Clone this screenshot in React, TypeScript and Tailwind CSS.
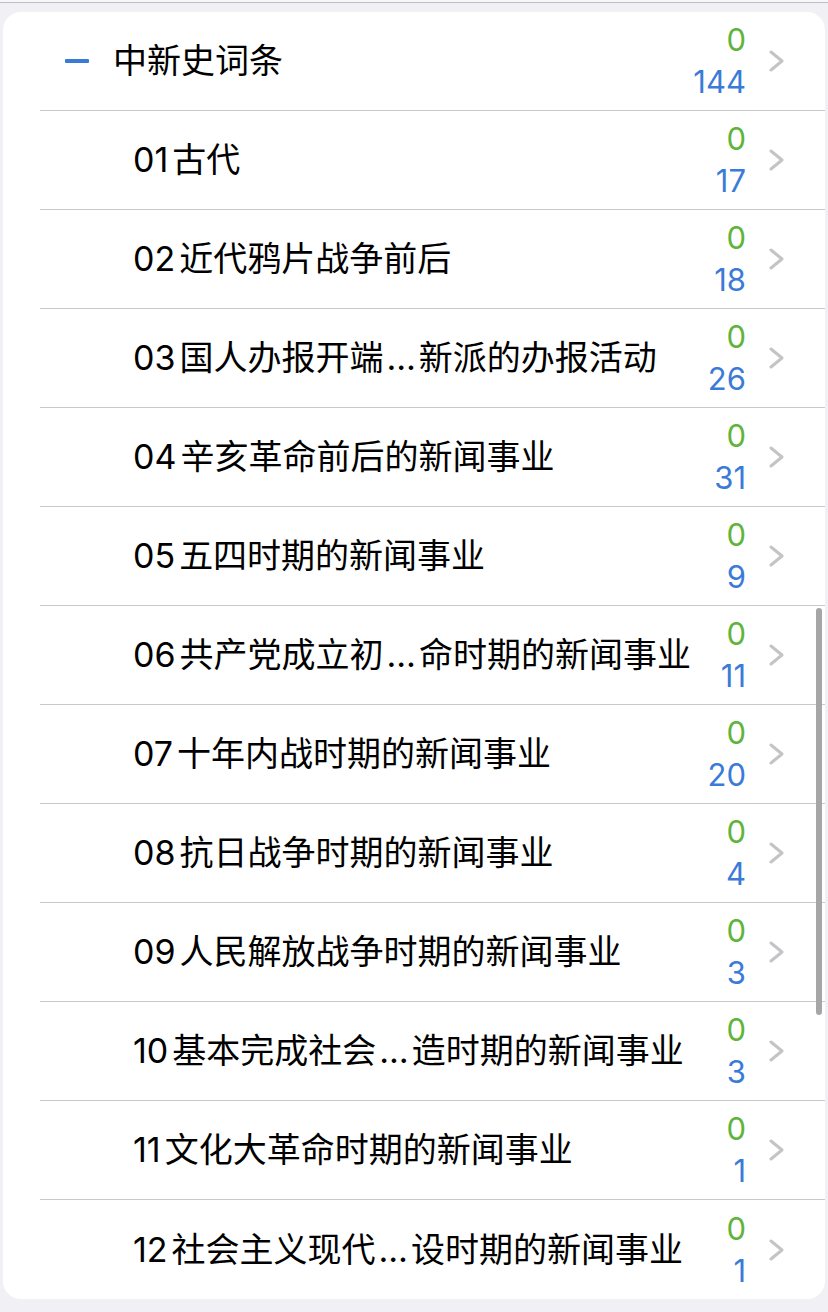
import React from "react";

const items: { num: string; label: string; count: number }[] = [
  { num: "01", label: "古代", count: 17 },
  { num: "02", label: "近代鸦片战争前后", count: 18 },
  { num: "03", label: "国人办报开端…新派的办报活动", count: 26 },
  { num: "04", label: "辛亥革命前后的新闻事业", count: 31 },
  { num: "05", label: "五四时期的新闻事业", count: 9 },
  { num: "06", label: "共产党成立初…命时期的新闻事业", count: 11 },
  { num: "07", label: "十年内战时期的新闻事业", count: 20 },
  { num: "08", label: "抗日战争时期的新闻事业", count: 4 },
  { num: "09", label: "人民解放战争时期的新闻事业", count: 3 },
  { num: "10", label: "基本完成社会…造时期的新闻事业", count: 3 },
  { num: "11", label: "文化大革命时期的新闻事业", count: 1 },
  { num: "12", label: "社会主义现代…设时期的新闻事业", count: 1 },
];

function Chevron() {
  return (
    <svg width="15" height="22" viewBox="0 0 15 22" className="shrink-0">
      <polyline
        points="2,2 13,11 2,20"
        fill="none"
        stroke="#c4c4c7"
        strokeWidth="3"
        strokeLinecap="round"
        strokeLinejoin="round"
      />
    </svg>
  );
}

function Counts({ done, total }: { done: number; total: number }) {
  return (
    <div className="flex flex-col items-end text-[31px] leading-[42px] font-['Inter','Noto_Sans_CJK_SC',sans-serif]">
      <span className="text-[#5fb43b]">{done}</span>
      <span className="text-[#3b7bd8]">{total}</span>
    </div>
  );
}

function Label({ text }: { text: string }) {
  const parts = text.split("…");
  if (parts.length === 1) return <>{text}</>;
  return (
    <>
      {parts[0]}
      <span className="px-[3px]">…</span>
      {parts[1]}
    </>
  );
}

function Row({
  children,
  done,
  total,
  last,
}: {
  children: React.ReactNode;
  done: number;
  total: number;
  last?: boolean;
}) {
  return (
    <div className="pl-[37px] h-[99px]">
      <div
        className={
          "h-full flex items-center pr-[41px] " +
          (last ? "" : "border-b border-[#c8c8cc]")
        }
      >
        <div className="flex-1 min-w-0 flex items-center">{children}</div>
        <Counts done={done} total={total} />
        <div className="w-[23px] shrink-0" />
        <Chevron />
      </div>
    </div>
  );
}

export default function App() {
  return (
    <div className="min-h-[1312px] w-[828px] bg-[#f0f0f5] font-['Inter','Noto_Sans_CJK_SC',sans-serif] text-black">
      <div className="h-[2px] bg-[#f7f7f9]" />
      <div className="h-px bg-[#bfbfc3]" />
      <div className="h-[9px]" />
      <div className="relative mx-[3px] bg-white rounded-[18px] overflow-hidden">
        <Row done={0} total={144}>
          <div className="ml-[25px] w-[24px] h-[4px] bg-[#3b7bd8] rounded-[1px]" />
          <span className="ml-[24px] text-[34px] leading-none whitespace-nowrap">
            中新史词条
          </span>
        </Row>
        {items.map((it, i) => (
          <Row key={it.num} done={0} total={it.count} last={i === items.length - 1}>
            <span className="ml-[93px] text-[34px] leading-none whitespace-nowrap">
              {it.num}
              <span className="ml-[4px]">
                <Label text={it.label} />
              </span>
            </span>
          </Row>
        ))}
        <div className="absolute left-[813px] top-[596px] w-[6px] h-[407px] rounded-full bg-[#a6a6a8]" />
      </div>
    </div>
  );
}
